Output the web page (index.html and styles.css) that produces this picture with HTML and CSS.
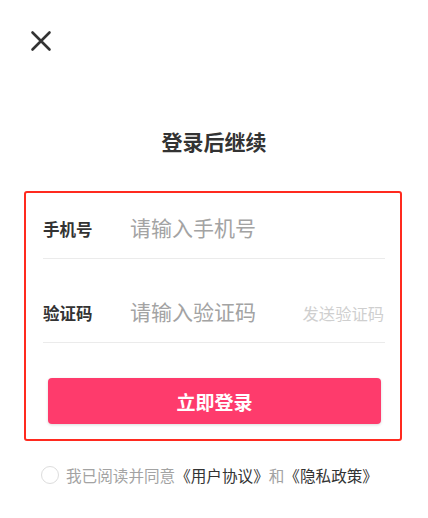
FILE: index.html
```html
<!DOCTYPE html>
<html lang="zh-CN">

<head>
    <meta charset="UTF-8">
    <meta name="viewport" content="width=device-width, initial-scale=1.0">
    <title>登录后继续</title>
    <link rel="stylesheet" href="styles.css">
</head>

<body>
    <div class="page">
        <button class="close" type="button" aria-label="关闭">
            <svg width="24" height="24" viewBox="0 0 24 24">
                <path d="M3.5 3.5 L20.5 20.5 M20.5 3.5 L3.5 20.5" stroke="#333" stroke-width="2.6" stroke-linecap="round" fill="none" />
            </svg>
        </button>

        <h1 class="title">登录后继续</h1>

        <form class="login-box">
            <div class="field">
                <label for="phone">手机号</label>
                <input type="text" id="phone" placeholder="请输入手机号">
            </div>
            <div class="field">
                <label for="code">验证码</label>
                <input type="text" id="code" placeholder="请输入验证码">
                <span class="send-code">发送验证码</span>
            </div>
            <button type="submit" class="submit">立即登录</button>
        </form>

        <div class="agree">
            <span class="check"></span>
            <span>我已阅读并同意<a href="#">《用户协议》</a>和<a href="#">《隐私政策》</a></span>
        </div>
    </div>
</body>

</html>
```

FILE: styles.css
```css
body {
    margin: 0;
    background-color: #fff;
    font-family: "Noto Sans CJK SC", "Noto Sans", sans-serif;
    color: #333;
}

.page {
    display: flex;
    flex-direction: column;
}

.close {
    margin: 29px 0 0 29px;
    padding: 0;
    width: 24px;
    height: 24px;
    border: none;
    background: none;
    cursor: pointer;
}

.close svg {
    display: block;
}

.title {
    margin: 74px 0 0;
    font-size: 21px;
    line-height: 28px;
    font-weight: bold;
    text-align: center;
    color: #333;
}

.login-box {
    margin: 36px 0 0 24px;
    width: 378px;
    box-sizing: border-box;
    border: 2px solid #ff2a1f;
    border-radius: 3px;
    padding: 7px 15px 15px 17px;
}

.field {
    display: flex;
    align-items: center;
    height: 58px;
    border-bottom: 1px solid #ebebeb;
}

.field + .field {
    margin-top: 25px;
}

.field label {
    width: 87px;
    flex-shrink: 0;
    font-size: 16.5px;
    font-weight: bold;
    color: #333;
}

.field input {
    flex: 1;
    min-width: 0;
    border: none;
    outline: none;
    padding: 0;
    margin-bottom: 5px;
    font-family: inherit;
    font-size: 21px;
    color: #333;
    background: none;
}

.field input::placeholder {
    color: #a3a3a3;
}

.send-code {
    font-size: 16.3px;
    color: #cfcfcf;
    margin-right: 1px;
}

.submit {
    display: block;
    margin: 35px 4px 0 5px;
    width: calc(100% - 9px);
    height: 46px;
    border: none;
    border-radius: 4px;
    background-color: #fe3b6c;
    box-shadow: 0 1px 3px rgba(0, 0, 0, 0.15);
    color: #fff;
    font-family: inherit;
    font-size: 19px;
    font-weight: bold;
    cursor: pointer;
}

.agree {
    display: flex;
    align-items: center;
    margin: 24px 0 0 41px;
    font-size: 15.6px;
    line-height: 20px;
    color: #a3a3a3;
}

.check {
    width: 18px;
    height: 18px;
    box-sizing: border-box;
    border: 1px solid #ddd;
    border-radius: 50%;
    margin-right: 7px;
}

.agree a {
    color: #333;
    text-decoration: none;
}
```
